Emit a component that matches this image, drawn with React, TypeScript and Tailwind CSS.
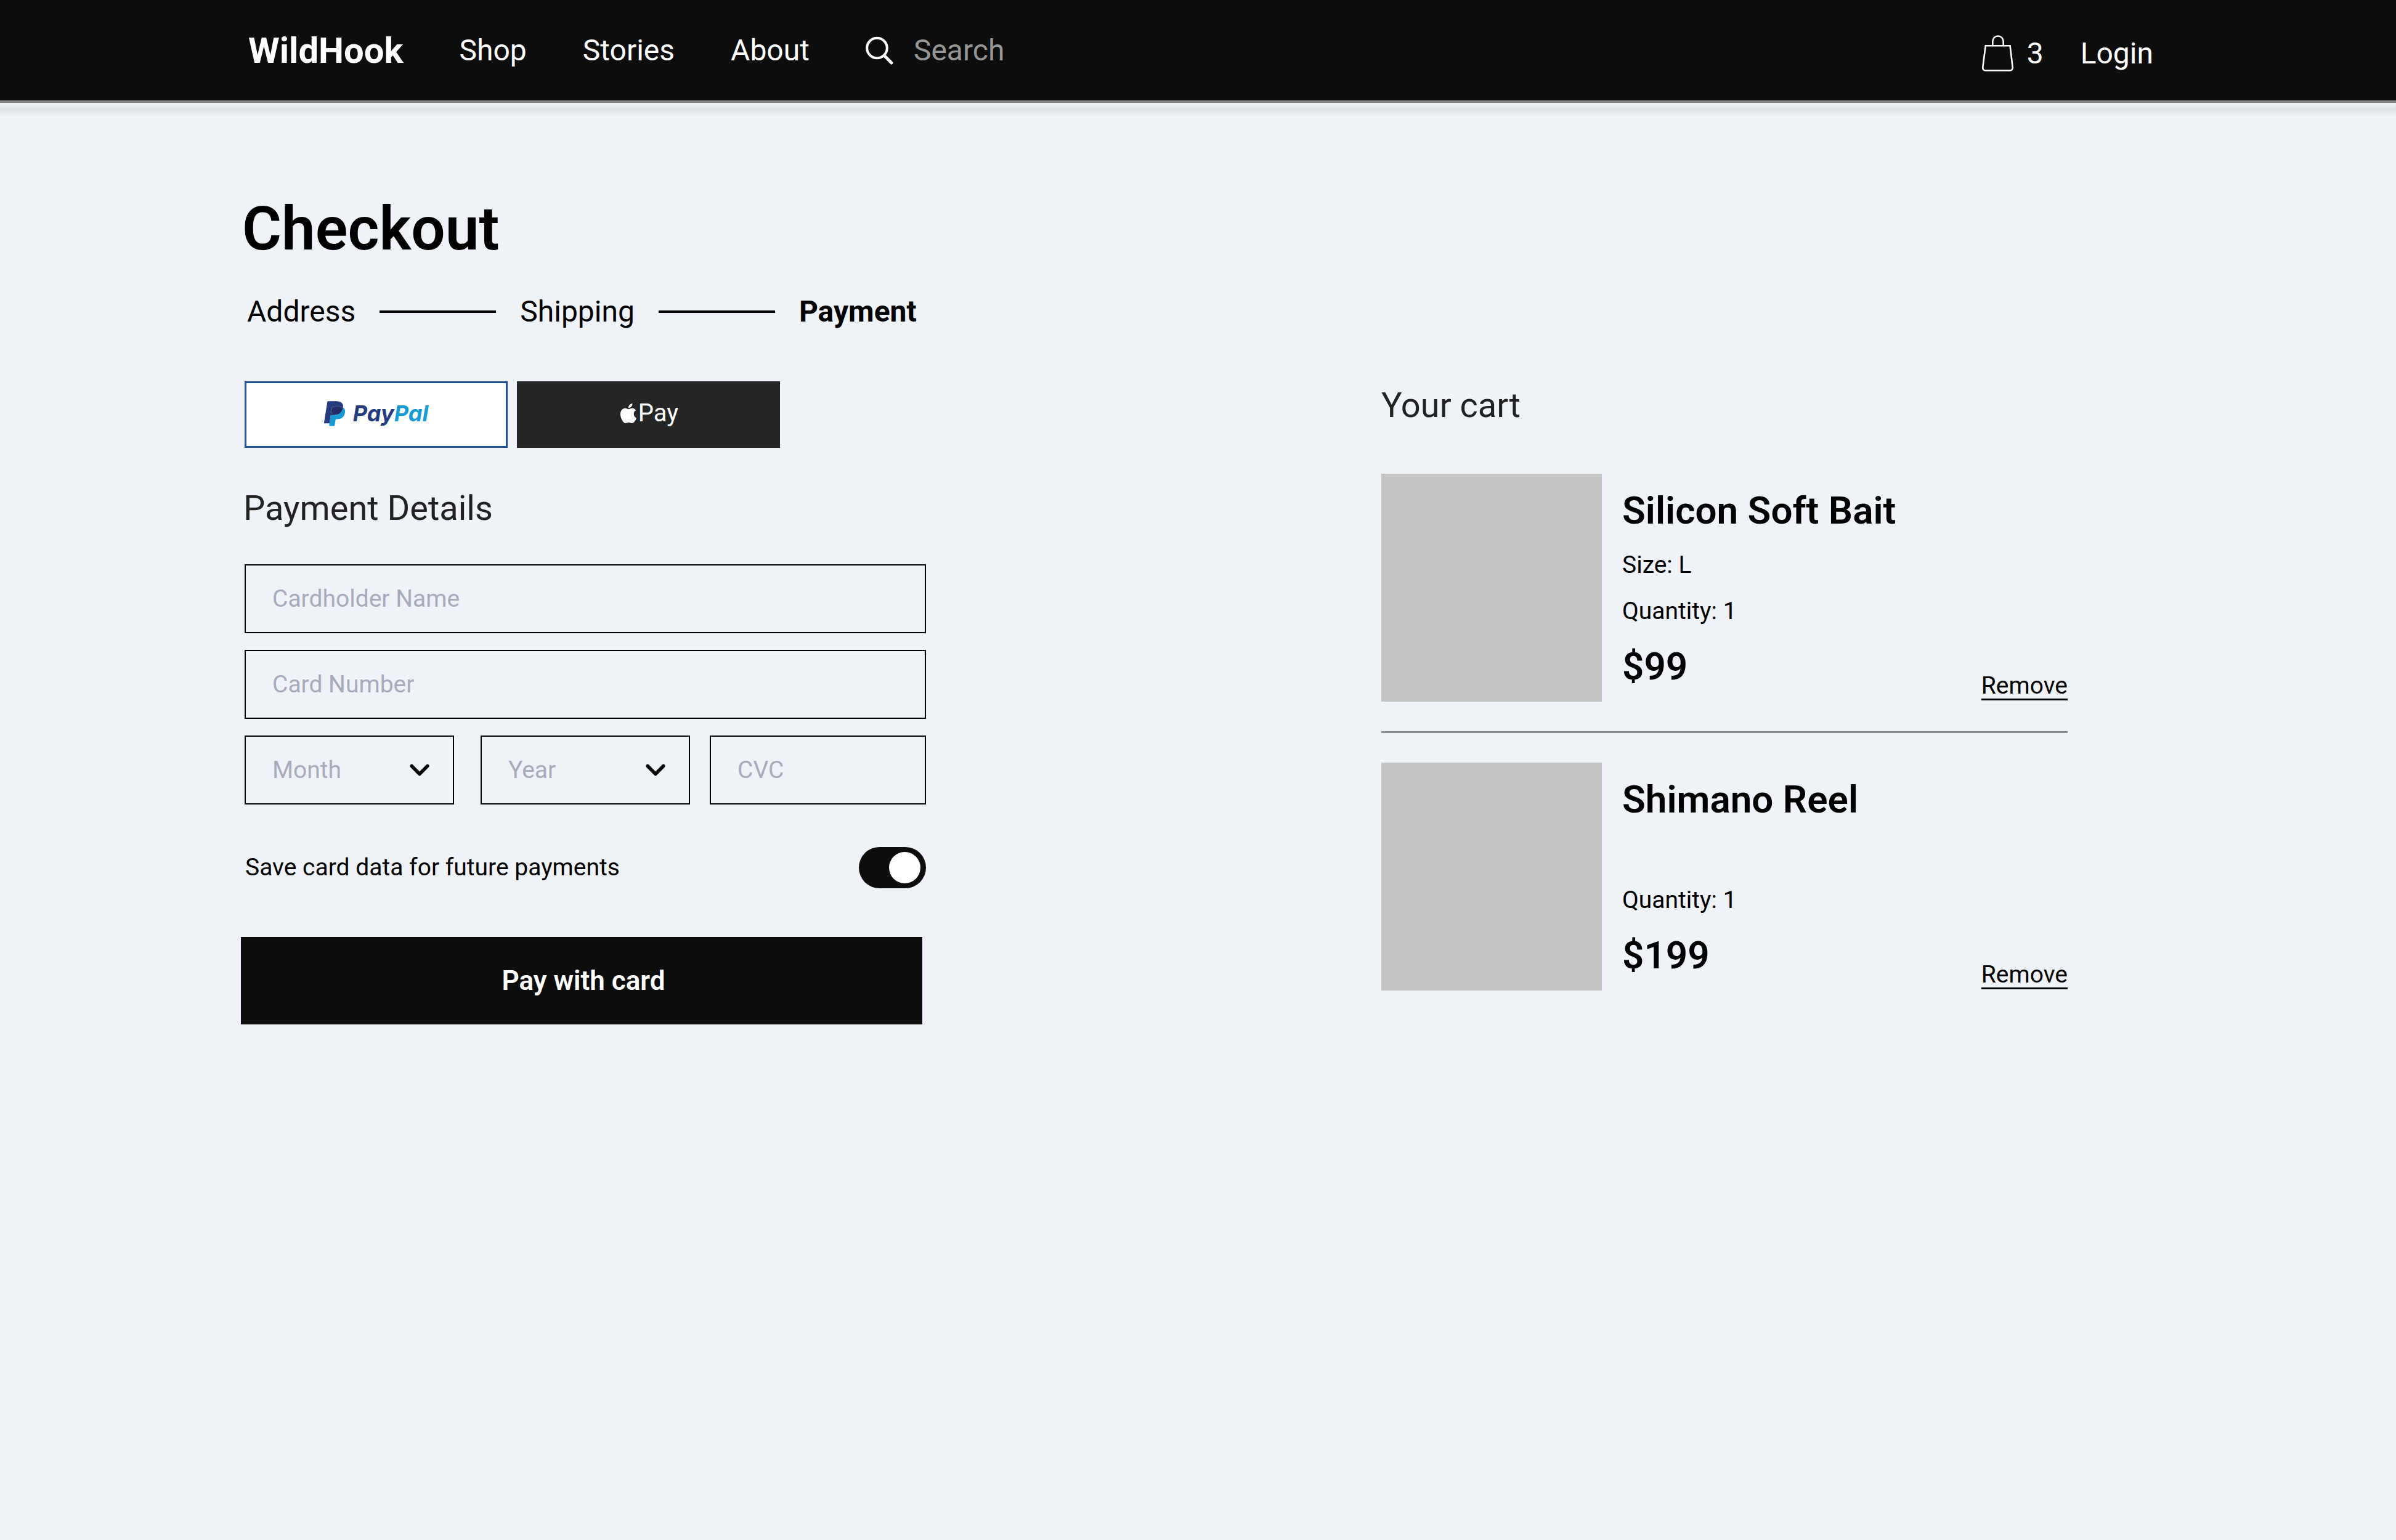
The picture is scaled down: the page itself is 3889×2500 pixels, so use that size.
import { useState } from "react";
import { SiApple } from "react-icons/si";

type CartItem = { id: string; name: string; size?: string; quantity: number; price: string };

const cart: CartItem[] = [
  { id: "bait", name: "Silicon Soft Bait", size: "L", quantity: 1, price: "$99" },
  { id: "reel", name: "Shimano Reel", quantity: 1, price: "$199" },
];

const months = ["01", "02", "03", "04", "05", "06", "07", "08", "09", "10", "11", "12"];
const years = ["2024", "2025", "2026", "2027", "2028", "2029"];

const fieldClass =
  "h-28 w-full min-w-0 appearance-none rounded-none border-2 border-black bg-transparent px-[43px] text-[39px] placeholder:text-[#a9abbd] placeholder:opacity-100";

function SearchIcon() {
  return (
    <svg viewBox="0 0 45 46" className="h-[46px] w-[45px]" fill="none" stroke="currentColor" strokeLinecap="round" aria-hidden="true">
      <circle cx="18.5" cy="19" r="16.3" strokeWidth="4" />
      <path d="M31 32 42 43" strokeWidth="5" />
    </svg>
  );
}

function BagIcon() {
  return (
    <svg viewBox="0 0 51 59" className="h-[59px] w-[51px]" fill="none" stroke="currentColor" strokeWidth="2.6" aria-hidden="true">
      <path d="M5.8 17.3H45.6L49.7 52Q50 57.5 45 57.5H6Q1 57.5 1.3 52Z" />
      <path d="M17.3 17V10.2a8.7 8.7 0 0 1 17.4 0V17" />
    </svg>
  );
}

function PayPalMark() {
  return (
    <svg viewBox="0 0 25.5 30.2" className="h-[41px] w-[34px]" aria-hidden="true">
      <path fill="#179BD7" d="M23.048 7.667c-.028.179-.06.362-.096.55-1.237 6.351-5.469 8.545-10.874 8.545H9.326c-.661 0-1.218.48-1.321 1.132L6.596 26.83l-.399 2.533a.704.704 0 0 0 .695.814h4.881c.578 0 1.069-.42 1.16-.99l.048-.248.919-5.832.059-.32c.09-.572.582-.992 1.16-.992h.73c4.729 0 8.431-1.92 9.513-7.476.452-2.321.218-4.259-.978-5.622a4.667 4.667 0 0 0-1.336-1.03z" />
      <path fill="#222D65" d="M21.754 7.151a9.757 9.757 0 0 0-1.203-.267 15.284 15.284 0 0 0-2.426-.177h-7.352a1.172 1.172 0 0 0-1.159.992L8.05 17.605l-.045.289a1.336 1.336 0 0 1 1.321-1.132h2.752c5.405 0 9.637-2.195 10.874-8.545.037-.188.068-.371.096-.55a6.594 6.594 0 0 0-1.294-.516z" />
      <path fill="#253B80" d="M9.614 7.699a1.169 1.169 0 0 1 1.159-.991h7.352c.871 0 1.684.057 2.426.177a9.757 9.757 0 0 1 1.481.353c.365.121.704.264 1.017.429.368-2.347-.003-3.945-1.272-5.392C20.378.682 17.853 0 14.622 0h-9.38c-.66 0-1.223.48-1.325 1.133L.01 25.898a.806.806 0 0 0 .795.932h5.791l1.454-9.225 1.564-9.906z" />
    </svg>
  );
}

function SelectField({ label, options, className }: { label: string; options: string[]; className: string }) {
  const [value, setValue] = useState("");
  return (
    <div className={`relative ${className}`}>
      <select
        aria-label={label}
        value={value}
        onChange={(e) => setValue(e.target.value)}
        className={`${fieldClass} ${value ? "text-black" : "text-[#a9abbd]"}`}
      >
        <option value="">{label}</option>
        {options.map((o) => (
          <option key={o} value={o}>{o}</option>
        ))}
      </select>
      <svg
        viewBox="0 0 32 20"
        className="pointer-events-none absolute top-[46px] right-10 h-5 w-8"
        fill="none"
        stroke="black"
        strokeWidth="5.5"
        strokeLinecap="round"
        strokeLinejoin="round"
        aria-hidden="true"
      >
        <path d="M3.2 3.5 16 16.5 28.8 3.5" />
      </svg>
    </div>
  );
}

function Header() {
  return (
    <header className="text-white">
      <div className="flex h-[163px] items-center justify-between bg-[#0d0d0d] pr-[394px] pl-[403px] text-5xl">
        <nav aria-label="Main" className="flex items-center gap-[91px]">
          <a href="#home" className="text-[58px] font-bold">WildHook</a>
          <a href="#shop">Shop</a>
          <a href="#stories">Stories</a>
          <a href="#about">About</a>
          <div className="flex items-center gap-[33px]">
            <SearchIcon />
            <input
              type="search"
              aria-label="Search"
              placeholder="Search"
              className="w-[480px] bg-transparent outline-none placeholder:text-[#969696] placeholder:opacity-100"
            />
          </div>
        </nav>
        <div className="flex items-center pt-2.5">
          <a href="#cart" aria-label="Cart, 3 items" className="flex items-center gap-[22px]">
            <BagIcon />
            <span>3</span>
          </a>
          <a href="#login" className="ml-[60px]">Login</a>
        </div>
      </div>
      <div className="h-1 bg-[#888888]" />
      <div className="h-[22px] bg-linear-to-b from-[#eceff3] via-[#dfe3e6] to-[#eff2f7]" />
    </header>
  );
}

function Steps() {
  return (
    <ol className="mt-[50px] flex items-center gap-[39px] pl-[10px] text-5xl leading-[56px]">
      <li>Address</li>
      <li aria-hidden="true" className="h-1 w-[189px] bg-black" />
      <li>Shipping</li>
      <li aria-hidden="true" className="h-1 w-[189px] bg-black" />
      <li aria-current="step" className="font-bold">Payment</li>
    </ol>
  );
}

function PaymentForm() {
  return (
    <form className="min-w-0" onSubmit={(e) => e.preventDefault()}>
      <div className="flex gap-[15px] pl-1.5">
        <button type="button" aria-label="PayPal" className="flex h-[108px] w-[427px] items-center justify-center gap-[13px] border-3 border-[#1f4f96] bg-white pb-1">
          <PayPalMark />
          <span className="font-['Inter',sans-serif] text-4xl font-bold text-[#253b80] italic">
            Pay<span className="text-[#179bd7]">Pal</span>
          </span>
        </button>
        <button type="button" aria-label="Apple Pay" className="flex h-[108px] w-[427px] items-center justify-center bg-[#252525] pb-1 text-[40px] text-white">
          <SiApple className="size-8" aria-hidden="true" />
          <span>Pay</span>
        </button>
      </div>

      <h2 className="mt-[66px] pl-1 text-[56px] leading-[64px] text-[#222222]">Payment Details</h2>

      <div className="mt-[59px] flex flex-col gap-[27px] pl-1.5">
        <input type="text" aria-label="Cardholder Name" placeholder="Cardholder Name" className={fieldClass} />
        <input type="text" inputMode="numeric" aria-label="Card Number" placeholder="Card Number" className={fieldClass} />
        <div className="flex">
          <SelectField label="Month" options={months} className="mr-[43px] flex-[340]" />
          <SelectField label="Year" options={years} className="mr-8 flex-[340]" />
          <div className="flex-[351]">
            <input type="text" inputMode="numeric" aria-label="CVC" placeholder="CVC" className={fieldClass} />
          </div>
        </div>
      </div>

      <div className="mt-[69px] flex items-center justify-between pl-[7px] text-[39px]">
        <label htmlFor="save-card">Save card data for future payments</label>
        <input
          id="save-card"
          type="checkbox"
          role="switch"
          defaultChecked
          className="flex h-[67px] w-[109px] appearance-none items-center rounded-full bg-[#999999] px-[9px] before:size-[51px] before:rounded-full before:bg-white checked:justify-end checked:bg-[#0d0d0d]"
        />
      </div>

      <div className="mt-[79px] pr-1.5">
        <button type="submit" className="h-[142px] w-full bg-[#0d0d0d] pl-1.5 text-[44px] font-semibold text-white">
          Pay with card
        </button>
      </div>
    </form>
  );
}

function Cart() {
  return (
    <section aria-labelledby="cart-title" className="min-w-0 pt-[7px]">
      <h2 id="cart-title" className="text-[56px] leading-[64px] text-[#222222]">Your cart</h2>
      <ul className="mt-[79px] divide-y-3 divide-[#8f8f8f]">
        {cart.map((item) => (
          <li key={item.id} className="flex gap-[33px] py-12 first:pt-0">
            <div className="h-[370px] w-[358px] shrink-0 bg-[#c4c4c4]" />
            <div className="flex flex-1 items-end justify-between">
              <div className="flex h-full flex-col pt-6 text-[39px] leading-[75px]">
                <h3 className="text-[62px] leading-[72px] font-semibold">{item.name}</h3>
                <p className="mt-[15px] h-[75px]">{item.size && `Size: ${item.size}`}</p>
                <p>Quantity: {item.quantity}</p>
                <p className="mt-4 text-[62px] leading-[72px] font-semibold">{item.price}</p>
              </div>
              <button type="button" className="mb-0.5 border-b-3 border-black text-[39px] leading-[42px]">
                Remove
              </button>
            </div>
          </li>
        ))}
      </ul>
    </section>
  );
}

export default function App() {
  return (
    <div className="min-h-screen bg-[#eff2f7] font-['Roboto',sans-serif] text-black">
      <Header />
      <main className="pt-[127px] pr-[533px] pl-[391px]">
        <h1 className="pl-0.5 text-[98px] leading-[112px] font-semibold">Checkout</h1>
        <Steps />
        <div className="mt-[85px] grid grid-cols-[1112fr_739fr_1114fr]">
          <PaymentForm />
          <div className="col-start-3 min-w-0">
            <Cart />
          </div>
        </div>
      </main>
    </div>
  );
}
